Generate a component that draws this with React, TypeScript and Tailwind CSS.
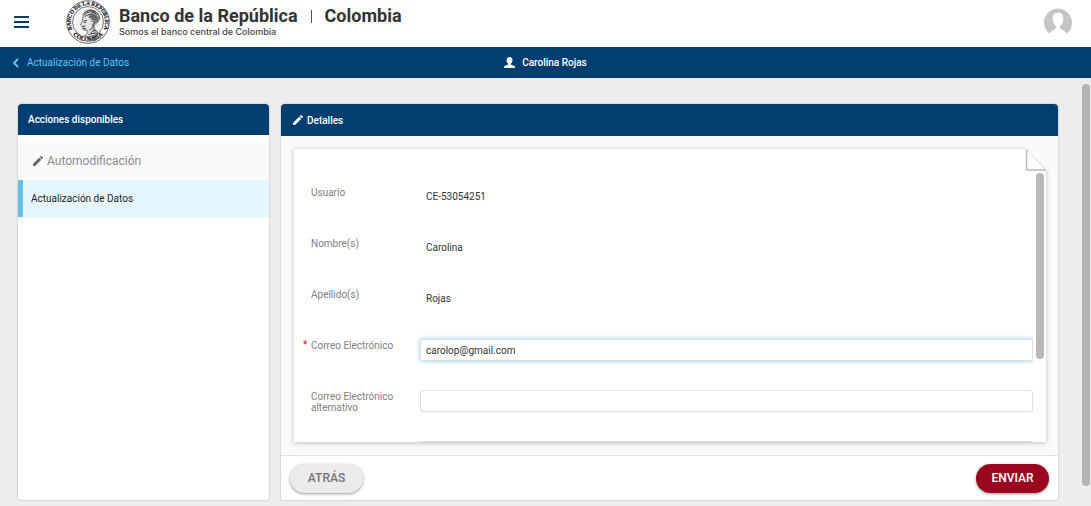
import React, { useState } from "react";

function Seal() {
  return (
    <svg viewBox="0 0 88 88" className="size-11 shrink-0" role="img" aria-label="Banco de la República Colombia">
      <defs>
        <path id="seal-top" d="M13 60 A34.500 34.500 0 1 1 75 60" />
        <path id="seal-bottom" d="M9 62 A39.500 39.500 0 0 0 79 62" />
      </defs>
      <circle cx="44" cy="44" r="42.500" fill="#fff" stroke="#666" strokeWidth="2" />
      <circle cx="44" cy="44" r="31" fill="#f4f4f4" stroke="#666" strokeWidth="1.800" />
      <g fontFamily="Liberation Serif, serif" fontWeight="700" fill="#111" stroke="#111" strokeWidth="0.400">
        <text fontSize="10.500">
          <textPath href="#seal-top" startOffset="50%" textAnchor="middle">BANCO DE LA REPUBLICA</textPath>
        </text>
        <text fontSize="12">
          <textPath href="#seal-bottom" startOffset="50%" textAnchor="middle">COLOMBIA</textPath>
        </text>
      </g>
      <path d="M34 33C34 22 46 17 55 21C65 25 69 36 64 44C60 49 56 47 56 53C56 59 62 62 64 66C55 73 42 75 37 71C44 68 45 63 42 60C36 61 33 60 34 56L32 52L29 50L33 42Z" fill="#e4e4e4" stroke="#444" strokeWidth="1.500" />
      <path d="M46 35C44 26 55 20 62 29C68 37 64 43 59 47L57 55L62 63L53 61L54 48C58 42 52 38 46 35Z" fill="#999" />
      <g fill="none" stroke="#333" strokeWidth="2" strokeLinecap="round">
        <path d="M36 30C42 23 52 21 60 28M38 33C44 28 53 27 61 34M46 35C52 31 59 35 64 39M50 39C55 36 60 39 62 43M52 43C57 41 59 44 56 48" />
        <path d="M36 42l5-1M37 45h2M34 53l4-1M35 57h4M47 60C52 57 55 54 54 48M50 65C55 61 58 60 60 62M46 69C51 68 57 65 61 66" />
        <path d="M52 22C61 22 67 30 67 38M39 25C45 19 56 20 61 25" strokeWidth="1.500" />
      </g>
    </svg>
  );
}

function Pencil({ className }: { className: string }) {
  return (
    <svg viewBox="3 3 18 18" fill="currentColor" className={className} aria-hidden="true">
      <path d="M3 17.250V21h3.750L17.810 9.940l-3.750-3.750L3 17.250zM20.710 7.040a1 1 0 0 0 0-1.410l-2.340-2.340a1 1 0 0 0-1.410 0l-1.830 1.830 3.750 3.750 1.830-1.830z" />
    </svg>
  );
}

function UserIcon() {
  return (
    <svg viewBox="0 0 22 22" className="size-[11px]" fill="currentColor" aria-hidden="true">
      <path d="M11 0C7 0 5 2.500 5 6.500C5 9 6.300 11.800 8 13.200V15.500L2 17.500Q0 18.300 0 20.500V22H22V20.500Q22 18.300 20 17.500L14 15.500V13.200C15.700 11.800 17 9 17 6.500C17 2.500 15 0 11 0Z" />
    </svg>
  );
}

function Avatar() {
  return (
    <svg viewBox="0 0 54 54" className="size-7" aria-hidden="true">
      <path d="M10 49A27 27 0 1 1 44 49Q39 43 33 41Q30 39 31 35Q37 30 37 21Q38 9 27 9Q16 9 17 21Q17 30 23 35Q24 39 21 41Q15 43 10 49Z" fill="#c4c5c5" />
    </svg>
  );
}

const details = [
  { label: "Usuario", value: "CE-53054251" },
  { label: "Nombre(s)", value: "Carolina" },
  { label: "Apellido(s)", value: "Rojas" },
];

const labelClass = "relative w-[109px] shrink-0 pt-px pr-4 text-[10px] leading-[11px] text-[#808080]";
const inputClass =
  "h-[22px] min-w-0 flex-1 rounded-[2px] border border-[#dedede] bg-white px-[5px] text-[10px] text-[#333] outline-none focus:shadow-[0_0_5px_#93c9f3]";

export default function App() {
  const [email, setEmail] = useState("carolop@gmail.com");
  const [altEmail, setAltEmail] = useState("");

  return (
    <div className="flex h-screen flex-col overflow-hidden bg-[#ededed] font-['Roboto',sans-serif] text-[10px] text-[#222]">
      <header className="flex h-[47px] shrink-0 items-center bg-white pr-[19px] pb-1 pl-[14px]">
        <button type="button" aria-label="Menú" className="mr-[37px] flex w-[15px] flex-col gap-[3px]">
          <span className="h-[2px] w-full bg-[#003e70]" />
          <span className="h-[2px] w-full bg-[#003e70]" />
          <span className="h-[2px] w-full bg-[#003e70]" />
        </button>
        <Seal />
        <div className="ml-[9px] whitespace-nowrap">
          <h1 className="flex items-center text-[18px] leading-[20px] font-bold text-[#333]">
            Banco de la República
            <span className="mx-[13px] h-[13px] w-px bg-[#555]" />
            Colombia
          </h1>
          <p className="font-['Inter',sans-serif] text-[9px] leading-[11px] font-medium text-[#444]">Somos el banco central de Colombia</p>
        </div>
        <button type="button" aria-label="Perfil" className="ml-auto">
          <Avatar />
        </button>
      </header>

      <nav className="grid h-[31px] shrink-0 grid-cols-3 items-center bg-[#003e70] px-3">
        <a href="#inicio" className="flex items-center gap-2 text-[#61c4f2]">
          <svg viewBox="0 0 7 10" className="h-[10px] w-[7px]" fill="none" stroke="currentColor" strokeWidth="1.800" aria-hidden="true">
            <path d="M6 1L2 5L6 9" />
          </svg>
          Actualización de Datos
        </a>
        <div className="flex items-center justify-center gap-[7px] font-medium text-white">
          <UserIcon />
          Carolina Rojas
        </div>
      </nav>

      <div className="flex min-h-0 flex-1">
        <main className="flex min-h-0 min-w-0 flex-1 gap-3 pt-[26px] pr-6 pb-[6px] pl-[18px]">
          <aside className="w-[251px] shrink-0 overflow-hidden rounded-[4px] bg-white shadow-[0_0_2px_#aaa]">
            <h2 className="flex h-[31px] items-center bg-[#003e70] px-[10px] font-medium text-white">Acciones disponibles</h2>
            <div className="mt-[6px] flex h-[39px] items-center gap-1 bg-[#fafafa] pl-[15px] text-[12px] text-[#8a8a8a]">
              <Pencil className="size-[10px] text-[#666]" />
              Automodificación
            </div>
            <a href="#datos" className="flex h-[37px] items-center border-l-[5px] border-[#65c0e6] bg-[#e6f6ff] pl-2 text-[#222]">
              Actualización de Datos
            </a>
          </aside>

          <section className="flex min-w-0 flex-1 flex-col overflow-hidden rounded-[4px] bg-[#fafafa] shadow-[0_0_2px_#aaa]">
            <h2 className="flex h-8 shrink-0 items-center gap-1 bg-[#003e70] px-3 font-medium text-white">
              <Pencil className="size-[10px]" />
              Detalles
            </h2>
            <form id="details" className="relative mt-[13px] mr-3 mb-[13px] ml-[13px] flex min-h-0 flex-1 bg-white shadow-[0_1px_5px_#bbb]">
              <div className="flex min-w-0 flex-1 flex-col gap-[29px] overflow-hidden pt-[37px] pl-[17px]">
                {details.map((item) => (
                  <div key={item.label} className="flex h-[22px] shrink-0">
                    <span className={labelClass}>{item.label}</span>
                    <span className="pl-[6px] text-[10px] leading-[22px] text-[#333]">{item.value}</span>
                  </div>
                ))}
                <div className="flex h-[22px] shrink-0">
                  <label htmlFor="email" className={labelClass}>
                    <span className="absolute top-0 -left-2 text-[#e00]">*</span>
                    Correo Electrónico
                  </label>
                  <input id="email" type="email" required autoFocus value={email} onChange={(e) => setEmail(e.target.value)} className={`${inputClass} caret-transparent`} />
                </div>
                <div className="flex h-[22px] shrink-0">
                  <label htmlFor="alt-email" className={labelClass}>Correo Electrónico alternativo</label>
                  <input id="alt-email" type="email" value={altEmail} onChange={(e) => setAltEmail(e.target.value)} className={inputClass} />
                </div>
                <div className="flex h-[22px] shrink-0">
                  <span className={labelClass} />
                  <input type="text" aria-label="Dato adicional" className={inputClass} />
                </div>
              </div>
              <div className="w-[13px] shrink-0 pt-6 pl-[3px]">
                <div className="h-[186px] w-2 rounded-full bg-[#b8b8b8]" />
              </div>
              <svg viewBox="0 0 20 22" className="absolute top-0 right-0 h-[22px] w-5 overflow-visible" aria-hidden="true">
                <path d="M0 -3H24V22H20L0 0Z" fill="#fafafa" />
                <path d="M0 0L20 21H0Z" fill="#fff" />
                <path d="M0 0L20 21" stroke="#d4d4d4" />
                <path d="M0.500 1V21H20" fill="none" stroke="#bbb" strokeWidth="1.500" />
              </svg>
            </form>
            <footer className="flex h-[45px] shrink-0 items-center justify-between border-t border-[#e2e2e2] bg-white px-[9px]">
              <button type="button" className="h-[29px] w-[73px] rounded-full bg-[#ebebeb] text-[12px] font-medium text-[#777] shadow-[0_1px_3px_#999]">
                ATRÁS
              </button>
              <button type="submit" form="details" className="h-[29px] w-[73px] rounded-full bg-[#9c0720] text-[12px] font-medium text-white shadow-[0_1px_3px_#999]">
                ENVIAR
              </button>
            </footer>
          </section>
        </main>
        <div className="w-[9px] shrink-0 pt-[6px] pb-5">
          <div className="h-full w-2 rounded-full bg-[#b4b4b4]" />
        </div>
      </div>
    </div>
  );
}
